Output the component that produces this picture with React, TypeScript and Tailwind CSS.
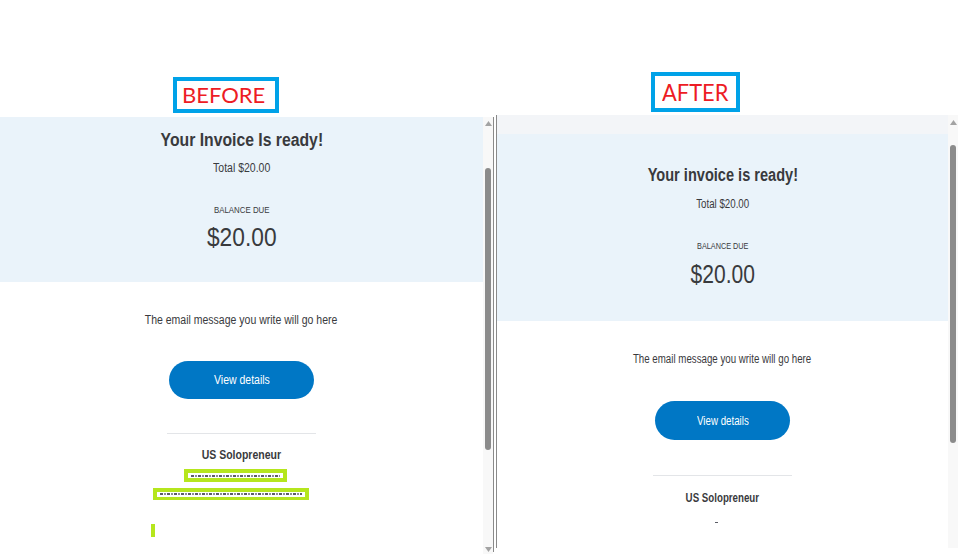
import React from "react";

const font = "font-['Liberation_Sans',Arial,sans-serif]";

function Arrow({ dir }: { dir: "up" | "down" }) {
  return (
    <svg width="7" height="5" viewBox="0 0 7 5" className="block">
      {dir === "up" ? <path d="M3.5 0 L7 5 L0 5 Z" fill="#a3a3a3" /> : <path d="M0 0 L7 0 L3.5 5 Z" fill="#a3a3a3" />}
    </svg>
  );
}

function Redacted({ w, h, ml, mt }: { w: string; h: string; ml: string; mt: string }) {
  return (
    <div className={`${w} ${h} ${ml} ${mt} self-start bg-[#b5e61d] flex items-center px-[4px]`}>
      <div className="h-[5px] w-full bg-white flex items-center px-[3px]">
        <div className="h-[2px] w-full bg-[repeating-linear-gradient(90deg,#5b5d66_0px,#5b5d66_3px,#ffffff_3px,#ffffff_4px,#8a8c94_4px,#8a8c94_6px,#ffffff_6px,#ffffff_7px)]" />
      </div>
    </div>
  );
}

export default function App() {
  const sL = "inline-block scale-x-[0.875] whitespace-nowrap";
  const sR = "inline-block scale-x-[0.81] whitespace-nowrap";
  return (
    <div className={`w-[960px] h-[554px] bg-white overflow-hidden flex flex-col ${font} text-[#393a3d]`}>
      {/* header with labels */}
      <div className="h-[115px] flex items-start shrink-0">
        <div className="ml-[173px] mt-[77px] w-[106px] h-[36px] border-[4px] border-[#00a2e8] flex items-center pl-[5px] font-['Lato','Open_Sans',sans-serif] text-[22px] leading-none text-[#ed1c24]">
          BEFORE
        </div>
        <div className="ml-[372px] mt-[72px] w-[89px] h-[40px] border-[4px] border-[#00a2e8] flex items-center pl-[7px] font-['Lato','Open_Sans',sans-serif] text-[23px] leading-none text-[#ed1c24]">
          <span className="inline-block scale-x-[0.95] origin-left whitespace-nowrap">AFTER</span>
        </div>
      </div>

      <div className="flex flex-1 items-start">
        {/* LEFT panel */}
        <div className="w-[483px] mt-[2px] flex flex-col items-center">
          <div className="w-full h-[165px] bg-[#eaf3fa] flex flex-col items-center pt-[12px]">
            <div className="text-[18px] leading-[22px] font-bold"><span className={sL}>Your Invoice Is ready!</span></div>
            <div className="mt-[10px] text-[12px] leading-[14px]"><span className={sL}>Total $20.00</span></div>
            <div className="mt-[30px] text-[9px] leading-[11px]"><span className={sL}>BALANCE DUE</span></div>
            <div className="mt-[6px] text-[26px] leading-[30px]"><span className={sL}>$20.00</span></div>
          </div>
          <div className="w-full flex flex-col items-center pt-[31px]">
            <div className="text-[12px] leading-[14px]"><span className={sL}>The email message you write will go here</span></div>
            <div className="mt-[34px] w-[145px] h-[38px] rounded-full bg-[#0077c5] text-white text-[12px] flex items-center justify-center">
              <span className={sL}>View details</span>
            </div>
            <div className="mt-[34px] w-[149px] h-px bg-[#e3e5e8]" />
            <div className="mt-[14px] text-[12px] leading-[14px] font-bold"><span className={sL}>US Solopreneur</span></div>
            <Redacted w="w-[103px]" h="h-[13px]" ml="ml-[184px]" mt="mt-[7px]" />
            <Redacted w="w-[156px]" h="h-[12px]" ml="ml-[153px]" mt="mt-[6px]" />
            <div className="self-start ml-[151px] mt-[24px] w-[4px] h-[13px] bg-[#b5e61d]" />
          </div>
        </div>

        {/* left scrollbar */}
        <div className="w-[10px] h-[437px] mt-[2px] bg-[#f8f8f8] flex flex-col items-center pt-[4px]">
          <Arrow dir="up" />
          <div className="mt-[42px] w-[6px] h-[282px] rounded-full bg-[#8b8b8b]" />
          <div className="mt-auto mb-[2px]"><Arrow dir="down" /></div>
        </div>
        <div className="w-px h-[435px] mt-[2px] bg-[#8a8a8a]" />
        <div className="w-[2px]" />

        {/* RIGHT panel */}
        <div className="w-[462px] h-[433px] border-l border-[#8a8a8a] flex">
          <div className="w-[451px] flex flex-col items-center">
            <div className="w-full h-[19px] bg-[#f3f5f8]" />
            <div className="w-full h-[187px] bg-[#eaf3fa] flex flex-col items-center pt-[30px]">
              <div className="text-[18px] leading-[22px] font-bold"><span className={sR}>Your invoice is ready!</span></div>
              <div className="mt-[11px] text-[12px] leading-[14px]"><span className={sR}>Total $20.00</span></div>
              <div className="mt-[30px] text-[9px] leading-[11px]"><span className={sR}>BALANCE DUE</span></div>
              <div className="mt-[7px] text-[26px] leading-[30px]"><span className={sR}>$20.00</span></div>
            </div>
            <div className="w-full flex flex-col items-center pt-[31px]">
              <div className="text-[12px] leading-[14px]"><span className={sR}>The email message you write will go here</span></div>
              <div className="mt-[35px] w-[135px] h-[39px] rounded-full bg-[#0077c5] text-white text-[12px] flex items-center justify-center">
                <span className={sR}>View details</span>
              </div>
              <div className="mt-[35px] w-[139px] h-px bg-[#e3e5e8]" />
              <div className="mt-[15px] text-[12px] leading-[14px] font-bold"><span className={sR}>US Solopreneur</span></div>
              <div className="mt-[17px] ml-[-12px] w-[3px] h-px bg-[#5b5d66]" />
            </div>
          </div>
          {/* right scrollbar */}
          <div className="w-[10px] h-full bg-[#f8f8f8] flex flex-col items-center pt-[5px]">
            <Arrow dir="up" />
            <div className="mt-[20px] w-[6px] h-[298px] rounded-full bg-[#8b8b8b]" />
          </div>
        </div>
      </div>
    </div>
  );
}
